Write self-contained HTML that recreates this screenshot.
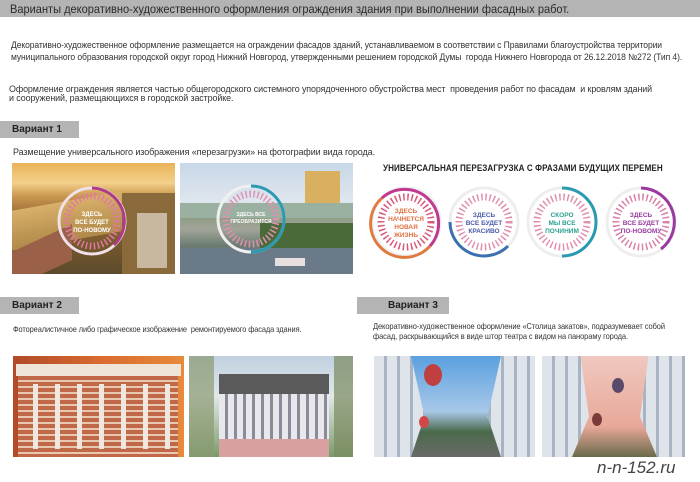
<!DOCTYPE html>
<html><head><meta charset="utf-8"><style>
*{margin:0;padding:0;box-sizing:border-box}
body{width:700px;height:482px;background:#fff;position:relative;overflow:hidden;font-family:"Liberation Sans",sans-serif;color:#333}
.a{position:absolute;white-space:nowrap;transform-origin:0 0}
.hdr{left:0;top:0;width:700px;height:17px;background:#b4b4b4;font-size:12px;padding:2px 0 0 10px;color:#2a2a2a}
.hdr span{display:inline-block;transform:scaleX(0.92);transform-origin:0 0}
.t{font-size:9px;color:#333;letter-spacing:-0.1px}
.lab{background:#b4b4b4;font-size:10px;font-weight:bold;color:#222;height:17px;padding-top:3px}
.ph{position:absolute;overflow:hidden}
</style></head><body>
<div class="a hdr"><span>Варианты декоративно-художественного оформления ограждения здания при выполнении фасадных работ.</span></div>
<div class="a t" style="left:11px;top:40px;transform:scaleX(0.95)">Декоративно-художественное оформление размещается на ограждении фасадов зданий, устанавливаемом в соответствии с Правилами благоустройства территории</div>
<div class="a t" style="left:11px;top:52px;transform:scaleX(0.95)">муниципального образования городской округ город Нижний Новгород, утвержденными решением городской Думы&nbsp; города Нижнего Новгорода от 26.12.2018 №272 (Тип 4).</div>
<div class="a t" style="left:9px;top:84px;transform:scaleX(0.99)">Оформление ограждения является частью общегородского системного упорядоченного обустройства мест&nbsp; проведения работ по фасадам&nbsp; и кровлям зданий</div>
<div class="a t" style="left:9px;top:93px;transform:scaleX(0.99)">и сооружений, размещающихся в городской застройке.</div>
<div class="a lab" style="left:0;top:121px;width:79px;padding-left:12px">Вариант 1</div>
<div class="a t" style="left:13px;top:147px">Размещение универсального изображения «перезагрузки» на фотографии вида города.</div>

<div class="ph" style="left:12px;top:163px;width:163px;height:111px;background:linear-gradient(180deg,#e9b25a 0%,#f3d08a 18%,#c9964f 30%,#a07038 45%,#7a5a2e 70%,#5b4a2c 100%)">
<div style="position:absolute;left:0;top:38px;width:110px;height:40px;background:linear-gradient(#d8b06a,#b08848);transform:skewY(-10deg)"></div>
<div style="position:absolute;left:110px;top:30px;width:55px;height:81px;background:#8a6a3a"></div>
<div style="position:absolute;left:0;top:75px;width:60px;height:36px;background:#9a6048;transform:skewY(-25deg)"></div>
<div style="position:absolute;left:125px;top:50px;width:30px;height:55px;background:#c8b8a0"></div>
<svg style="position:absolute;left:42px;top:20px" width="76" height="76"><circle cx="38" cy="38" r="33" fill="none" stroke="#f0e0e8" stroke-width="3"/><path d="M38 5 A33 33 0 0 1 60 62" fill="none" stroke="#b03a8a" stroke-width="3"/><circle cx="38" cy="38" r="25" fill="none" stroke="#e07aa0" stroke-width="7" stroke-dasharray="1.5 2.5"/><text x="38" y="33" font-size="6" fill="#fff" text-anchor="middle" font-weight="bold">ЗДЕСЬ</text><text x="38" y="41" font-size="6" fill="#fff" text-anchor="middle" font-weight="bold">ВСЕ БУДЕТ</text><text x="38" y="49" font-size="6" fill="#fff" text-anchor="middle" font-weight="bold">ПО-НОВОМУ</text></svg>
</div>

<div class="ph" style="left:180px;top:163px;width:173px;height:111px;background:linear-gradient(180deg,#c8d8e8 0%,#dfe6ee 35%,#8a9a80 45%,#a0a498 60%,#6a7a70 75%,#8a9aa8 100%)">
<div style="position:absolute;left:125px;top:8px;width:35px;height:40px;background:#d8b060"></div>
<div style="position:absolute;left:0;top:40px;width:173px;height:15px;background:#9ab0a0"></div>
<div style="position:absolute;left:80px;top:60px;width:93px;height:25px;background:#4a6a3a"></div>
<div style="position:absolute;left:0;top:85px;width:173px;height:26px;background:#6a7a88"></div>
<div style="position:absolute;left:95px;top:95px;width:30px;height:8px;background:#e8e0e0"></div>
<svg style="position:absolute;left:33px;top:18px" width="76" height="76"><circle cx="38" cy="38" r="33" fill="none" stroke="#f0f0f0" stroke-width="3"/><path d="M38 5 A33 33 0 0 1 38 71" fill="none" stroke="#2a9ab0" stroke-width="3"/><circle cx="38" cy="38" r="25" fill="none" stroke="#e090b0" stroke-width="7" stroke-dasharray="1.5 2.5"/><text x="38" y="35" font-size="5" fill="#fff" text-anchor="middle" font-weight="bold">ЗДЕСЬ ВСЕ</text><text x="38" y="42" font-size="5" fill="#fff" text-anchor="middle" font-weight="bold">ПРЕОБРАЗИТСЯ</text></svg>
</div>

<div class="a" style="left:383px;top:163px;font-size:9.5px;font-weight:bold;color:#222;letter-spacing:0.1px;transform:scaleX(0.85)">УНИВЕРСАЛЬНАЯ ПЕРЕЗАГРУЗКА С ФРАЗАМИ БУДУЩИХ ПЕРЕМЕН</div>
<svg class="a" style="left:365px;top:181px" width="330" height="84">
<g transform="translate(41,41)"><circle r="34" fill="none" stroke="#eee" stroke-width="3"/><path d="M-24 -24 A34 34 0 1 0 24 24" fill="none" stroke="#e07a40" stroke-width="3"/><path d="M24 24 A34 34 0 0 0 -24 -24" fill="none" stroke="#c03a90" stroke-width="3"/><circle r="25" fill="none" stroke="#d85a7a" stroke-width="7" stroke-dasharray="1.5 2.6"/><g font-size="6.5" font-weight="bold" fill="#e07040" text-anchor="middle"><text y="-9">ЗДЕСЬ</text><text y="-1">НАЧНЕТСЯ</text><text y="7">НОВАЯ</text><text y="15">ЖИЗНЬ</text></g></g>
<g transform="translate(119,41)"><circle r="34" fill="none" stroke="#eee" stroke-width="3"/><path d="M-34 0 A34 34 0 0 0 24 24" fill="none" stroke="#3a70b0" stroke-width="3"/><circle r="25" fill="none" stroke="#e090b0" stroke-width="7" stroke-dasharray="1.5 2.6"/><g font-size="6.5" font-weight="bold" fill="#4a5aa8" text-anchor="middle"><text y="-5">ЗДЕСЬ</text><text y="3">ВСЕ БУДЕТ</text><text y="11">КРАСИВО</text></g></g>
<g transform="translate(197,41)"><circle r="34" fill="none" stroke="#eee" stroke-width="3"/><path d="M0 -34 A34 34 0 0 1 0 34" fill="none" stroke="#2a9ab0" stroke-width="3"/><circle r="25" fill="none" stroke="#e090b0" stroke-width="7" stroke-dasharray="1.5 2.6"/><g font-size="6.5" font-weight="bold" fill="#2aa090" text-anchor="middle"><text y="-5">СКОРО</text><text y="3">МЫ ВСЕ</text><text y="11">ПОЧИНИМ</text></g></g>
<g transform="translate(276,41)"><circle r="34" fill="none" stroke="#eee" stroke-width="3"/><path d="M0 -34 A34 34 0 0 1 20 27" fill="none" stroke="#9a3aa0" stroke-width="3"/><circle r="25" fill="none" stroke="#d880a8" stroke-width="7" stroke-dasharray="1.5 2.6"/><g font-size="6.5" font-weight="bold" fill="#9a3aa0" text-anchor="middle"><text y="-5">ЗДЕСЬ</text><text y="3">ВСЕ БУДЕТ</text><text y="11">ПО-НОВОМУ</text></g></g>
</svg>

<div class="a lab" style="left:0;top:297px;width:79px;padding-left:12px">Вариант 2</div>
<div class="a t" style="left:13px;top:324px;font-size:8.5px;transform:scaleX(0.87)">Фотореалистичное либо графическое изображение&nbsp; ремонтируемого фасада здания.</div>
<div class="a lab" style="left:357px;top:297px;width:92px;padding-left:31px">Вариант 3</div>
<div class="a t" style="left:373px;top:321px;font-size:8.5px;transform:scaleX(0.88)">Декоративно-художественное оформление «Столица закатов», подразумевает собой</div>
<div class="a t" style="left:373px;top:331px;font-size:8.5px;transform:scaleX(0.88)">фасад, раскрывающийся в виде штор театра с видом на панораму города.</div>

<div class="ph" style="left:13px;top:356px;width:171px;height:101px;background:linear-gradient(90deg,#b04a28,#d86a30 50%,#e88a3a)">
<div style="position:absolute;left:5px;top:8px;width:160px;height:93px;background:repeating-linear-gradient(180deg,#c06848 0 4px,#e8c8b0 4px 6px)"></div>
<div style="position:absolute;left:3px;top:8px;width:165px;height:12px;background:#eee4d8"></div>
<div style="position:absolute;left:10px;top:28px;width:150px;height:65px;background:repeating-linear-gradient(90deg,transparent 0 10px,#f0e8e0 10px 15px,transparent 15px 22px)"></div>
</div>
<div class="ph" style="left:189px;top:356px;width:164px;height:101px;background:linear-gradient(180deg,#c0d0e0,#e0e8e8 40%,#7a9a6a)">
<div style="position:absolute;left:30px;top:18px;width:110px;height:20px;background:#5a5a5a"></div>
<div style="position:absolute;left:30px;top:38px;width:110px;height:45px;background:repeating-linear-gradient(90deg,#e8e8ec 0 6px,#8a8a98 6px 9px)"></div>
<div style="position:absolute;left:30px;top:83px;width:110px;height:18px;background:#d8a0a0"></div>
<div style="position:absolute;left:0;top:0;width:25px;height:101px;background:#8a9a70;opacity:.7"></div>
<div style="position:absolute;left:145px;top:0;width:19px;height:101px;background:#7a8a60;opacity:.7"></div>
</div>

<div class="ph" style="left:374px;top:356px;width:161px;height:101px;background:repeating-linear-gradient(90deg,#dfe3ea 0 10px,#a8b4c4 10px 13px)">
<div style="position:absolute;left:37px;top:0;width:90px;height:101px;background:linear-gradient(180deg,#5aa0e0,#a8c8e8 55%,#4a6a4a 75%,#6a6a6a);clip-path:polygon(0 0,100% 0,85% 60%,100% 100%,0 100%,15% 60%)"></div>
<div style="position:absolute;left:50px;top:8px;width:18px;height:22px;border-radius:50%;background:#c04040"></div>
<div style="position:absolute;left:45px;top:60px;width:10px;height:12px;border-radius:50%;background:#d04848"></div>
</div>
<div class="ph" style="left:542px;top:356px;width:143px;height:101px;background:repeating-linear-gradient(90deg,#dfe3ea 0 10px,#a8b4c4 10px 13px)">
<div style="position:absolute;left:30px;top:0;width:85px;height:101px;background:linear-gradient(180deg,#f0c8c0,#e8a898 70%,#6a6a4a);clip-path:polygon(10% 0,90% 0,80% 60%,100% 100%,0 100%,20% 60%)"></div>
<div style="position:absolute;left:70px;top:22px;width:12px;height:15px;border-radius:50%;background:#5a4a6a"></div>
<div style="position:absolute;left:50px;top:57px;width:10px;height:13px;border-radius:50%;background:#7a3a3a"></div>
</div>

<div class="a" style="left:597px;top:458px;font-size:17px;font-style:italic;color:#444">n-n-152.ru</div>
</body></html>
